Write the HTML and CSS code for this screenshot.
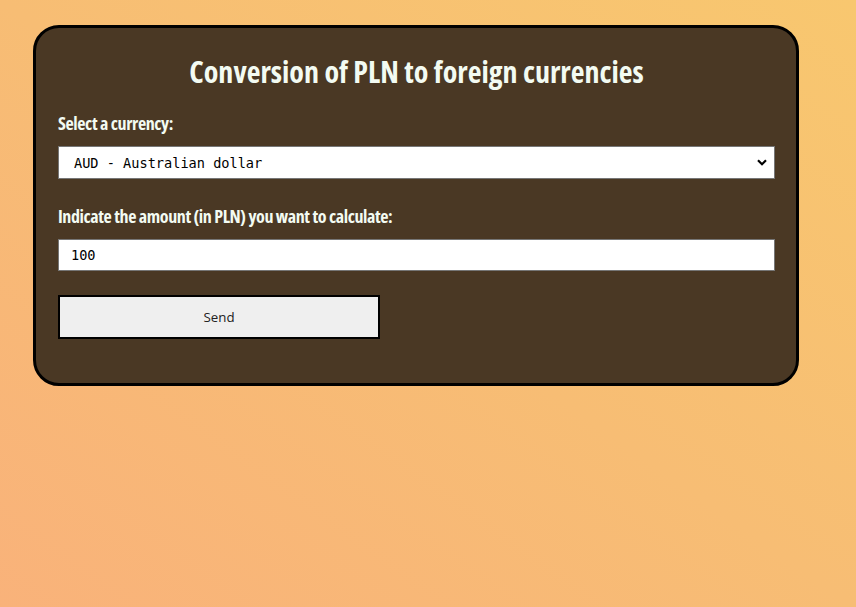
FILE: index.html
```html
<!DOCTYPE html>
<html lang="en">
<head>
<meta charset="utf-8">
<title>Currency converter</title>
<link rel="stylesheet" href="styles.css">
</head>
<body>
<main class="card">
  <h1 class="title">Conversion of PLN to foreign currencies</h1>
  <form class="form">
    <label class="label" for="currency">Select a currency:</label>
    <div class="select-wrap">
      <select id="currency" class="field select">
        <option>AUD - Australian dollar</option>
      </select>
      <svg class="chevron" width="10" height="7" viewBox="0 0 10 7"><path d="M1 1.2 L5 5.2 L9 1.2" fill="none" stroke="#000" stroke-width="2.2"/></svg>
    </div>
    <label class="label label-2" for="amount">Indicate the amount (in PLN) you want to calculate:</label>
    <input id="amount" class="field input" type="text" value="100">
    <button type="button" class="btn">Send</button>
  </form>
</main>
</body>
</html>
```
FILE: styles.css
```css
html, body {
  margin: 0;
  padding: 0;
  height: 100%;
}
body {
  background: linear-gradient(to top right, #f9b27a 0%, #f7bd74 50%, #f8c76f 100%);
  font-family: "Open Sans", sans-serif;
  font-stretch: 75%;
  padding: 25px 0 0 33px;
  box-sizing: border-box;
}
.card {
  width: 766px;
  height: 361px;
  box-sizing: border-box;
  background: #4a3824;
  border: 3px solid #000;
  border-radius: 26px;
  padding: 0 21px 0 22px;
}
.title {
  margin: 25px 0 0;
  text-align: center;
  color: #f3fbf2;
  font-size: 30px;
  line-height: 38px;
  font-weight: 700;
}
.form {
  display: flex;
  flex-direction: column;
  align-items: flex-start;
}
.label {
  color: #f3fbf2;
  font-size: 18px;
  font-weight: 700;
  line-height: 22px;
  letter-spacing: -0.4px;
  margin-top: 21px;
}
.label-2 {
  margin-top: 26px;
}
.select-wrap {
  position: relative;
  width: 100%;
  margin-top: 12px;
}
.field {
  width: 100%;
  box-sizing: border-box;
  background: #fff;
  border: 1px solid #767676;
  border-radius: 0;
  font-family: "DejaVu Sans Mono", "Liberation Mono", monospace;
  font-stretch: normal;
  font-size: 13.6px;
  color: #000;
  outline: none;
}
.select {
  height: 33px;
  -webkit-appearance: none;
  appearance: none;
  padding: 0 0 0 15px;
  display: block;
}
.chevron {
  position: absolute;
  right: 8px;
  top: 13px;
}
.input {
  height: 32px;
  margin-top: 12px;
  padding: 0 12px;
}
.btn {
  margin-top: 24px;
  width: 322px;
  height: 44px;
  background: #efefef;
  border: 2px solid #000;
  border-radius: 0;
  font-family: "Open Sans", "DejaVu Sans", sans-serif;
  font-stretch: normal;
  font-size: 13.3px;
  color: #222;
  padding: 0;
}
```
